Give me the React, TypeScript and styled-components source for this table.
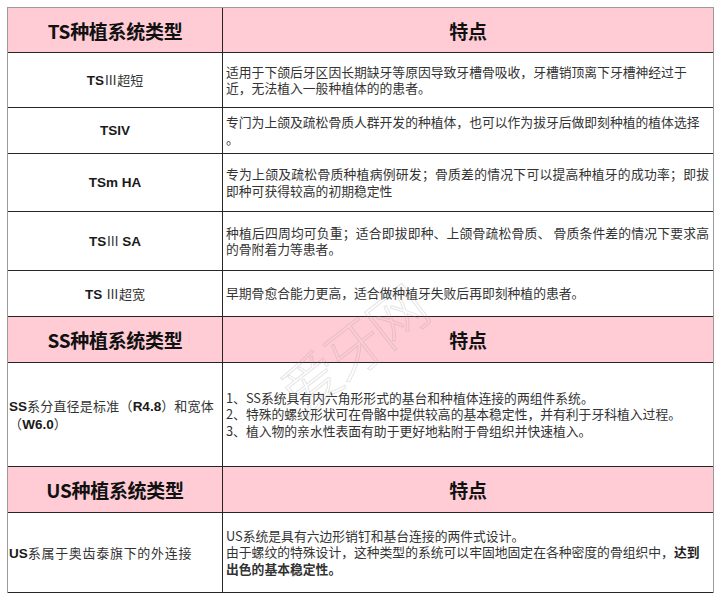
import React from 'react';
import styled, { createGlobalStyle } from 'styled-components';

const GlobalStyle = createGlobalStyle`
    html, body {
        margin: 0;
        padding: 0;
        background: #ffffff;
    }
    body {
        font-family: "Liberation Sans", "Noto Sans CJK SC", sans-serif;
    }
`;

const Page = styled.div`
    width: 720px;
    height: 598px;
    padding: 7px 0 0 7px;
    box-sizing: border-box;
    overflow: hidden;
`;

const Table = styled.div`
    position: relative;
    width: 707px;
    box-sizing: border-box;
    border-top: 1px solid #9a9a9a;
    border-left: 1px solid #9a9a9a;
    border-right: 1px solid #9a9a9a;
`;

const Row = styled.div<{ $h: number; $head?: boolean }>`
    display: grid;
    grid-template-columns: 215px 1fr;
    height: ${p => p.$h}px;
    box-sizing: border-box;
    border-bottom: 1px solid #262626;
    background: ${p => (p.$head ? '#ffccd5' : '#ffffff')};
`;

const HeadCell = styled.div<{ $divider?: boolean }>`
    display: flex;
    align-items: center;
    justify-content: center;
    font-family: "Noto Sans CJK SC", sans-serif;
    font-weight: 700;
    font-size: 19px;
    color: #111;
    letter-spacing: -0.3px;
    border-right: ${p => (p.$divider ? '1px solid #262626' : 'none')};
`;

const NameCell = styled.div<{ $left?: boolean; $spacing?: number }>`
    display: flex;
    flex-direction: column;
    align-items: ${p => (p.$left ? 'flex-start' : 'center')};
    justify-content: center;
    padding-left: ${p => (p.$left ? '1px' : '0')};
    border-right: 1px solid #262626;
    font-size: 13px;
    line-height: 17px;
    color: #1a1a1a;
    white-space: nowrap;
    letter-spacing: ${p => p.$spacing ?? 0}px;
`;

const Latin = styled.span`
    font-family: "Liberation Sans", sans-serif;
    font-weight: 700;
    font-size: 13.5px;
    letter-spacing: 0;
`;

const Han = styled.span`
    font-family: "Noto Sans CJK SC", sans-serif;
    font-weight: 400;
    color: #333;
`;

const TextCell = styled.div`
    display: flex;
    flex-direction: column;
    justify-content: center;
    padding: 0 4px 0 3px;
    font-family: "Noto Sans CJK SC", sans-serif;
    font-size: 12.8px;
    line-height: 16.5px;
    color: #333;
`;

const Line = styled.div<{ $justify?: boolean; $bold?: boolean }>`
    white-space: nowrap;
    text-align: ${p => (p.$justify ? 'justify' : 'left')};
    text-align-last: ${p => (p.$justify ? 'justify' : 'auto')};
    font-weight: ${p => (p.$bold ? 700 : 400)};
`;

const Strong = styled.span`
    font-weight: 700;
    color: #222;
`;

const Watermark = styled.div`
    position: absolute;
    left: 262px;
    top: 298px;
    transform: rotate(-38deg);
    transform-origin: center;
    font-family: "Noto Sans CJK SC", sans-serif;
    font-weight: 300;
    font-size: 58px;
    letter-spacing: -4px;
    color: transparent;
    -webkit-text-stroke: 1px rgba(150, 150, 150, 0.25);
    pointer-events: none;
    user-select: none;
`;

type TsRow = { h: number; name: React.ReactNode; lines: string[]; justify?: boolean };

const tsRows: TsRow[] = [
    {
        h: 55,
        name: <><Latin>TS</Latin><Han>Ⅲ超短</Han></>,
        lines: [
            '适用于下颌后牙区因长期缺牙等原因导致牙槽骨吸收，牙槽销顶离下牙槽神经过于',
            '近，无法植入一般种植体的的患者。',
        ],
    },
    {
        h: 46,
        name: <Latin>TSIV</Latin>,
        lines: [
            '专门为上颌及疏松骨质人群开发的种植体，也可以作为拔牙后做即刻种植的植体选择',
            '。',
        ],
    },
    {
        h: 58,
        name: <Latin>TSm HA</Latin>,
        lines: [
            '专为上颌及疏松骨质种植病例研发；骨质差的情况下可以提高种植牙的成功率；即拔',
            '即种可获得较高的初期稳定性',
        ],
        justify: true,
    },
    {
        h: 59,
        name: <><Latin>TS</Latin><Han>Ⅲ </Han><Latin>SA</Latin></>,
        lines: [
            '种植后四周均可负重；适合即拔即种、上颌骨疏松骨质、 骨质条件差的情况下要求高',
            '的骨附着力等患者。',
        ],
        justify: true,
    },
    {
        h: 46,
        name: <><Latin>TS </Latin><Han>Ⅲ超宽</Han></>,
        lines: ['早期骨愈合能力更高，适合做种植牙失败后再即刻种植的患者。'],
    },
];

function Header({ h, title }: { h: number; title: string }) {
    return <Row $h={h} $head>
        <HeadCell $divider>{title}</HeadCell>
        <HeadCell>特点</HeadCell>
    </Row>
}

export default function App() {
    return <>
        <GlobalStyle />
        <Page>
            <Table>
                <Header h={45} title="TS种植系统类型" />
                {tsRows.map((r, i) => (
                    <Row key={i} $h={r.h}>
                        <NameCell><div>{r.name}</div></NameCell>
                        <TextCell>
                            {r.lines.map((l, j) => (
                                <Line key={j} $justify={r.justify && j < r.lines.length - 1}>{l}</Line>
                            ))}
                        </TextCell>
                    </Row>
                ))}

                <Header h={46} title="SS种植系统类型" />
                <Row $h={104}>
                    <NameCell $left $spacing={0.2}>
                        <div><Latin>SS</Latin><Han>系分直径是标准（</Han><Latin>R4.8</Latin><Han>）和宽体</Han></div>
                        <div><Han>（</Han><Latin>W6.0</Latin><Han>）</Han></div>
                    </NameCell>
                    <TextCell>
                        <Line>1、SS系统具有内六角形形式的基台和种植体连接的两组件系统。</Line>
                        <Line>2、特殊的螺纹形状可在骨骼中提供较高的基本稳定性，并有利于牙科植入过程。</Line>
                        <Line>3、植入物的亲水性表面有助于更好地粘附于骨组织并快速植入。</Line>
                    </TextCell>
                </Row>

                <Header h={46} title="US种植系统类型" />
                <Row $h={80}>
                    <NameCell $left $spacing={0.7}>
                        <div><Latin>US</Latin><Han>系属于奥齿泰旗下的外连接</Han></div>
                    </NameCell>
                    <TextCell>
                        <Line>US系统是具有六边形销钉和基台连接的两件式设计。</Line>
                        <Line>由于螺纹的特殊设计，这种类型的系统可以牢固地固定在各种密度的骨组织中，<Strong>达到</Strong></Line>
                        <Line $bold>出色的基本稳定性。</Line>
                    </TextCell>
                </Row>

                <Watermark>爱牙网</Watermark>
            </Table>
        </Page>
    </>
}
